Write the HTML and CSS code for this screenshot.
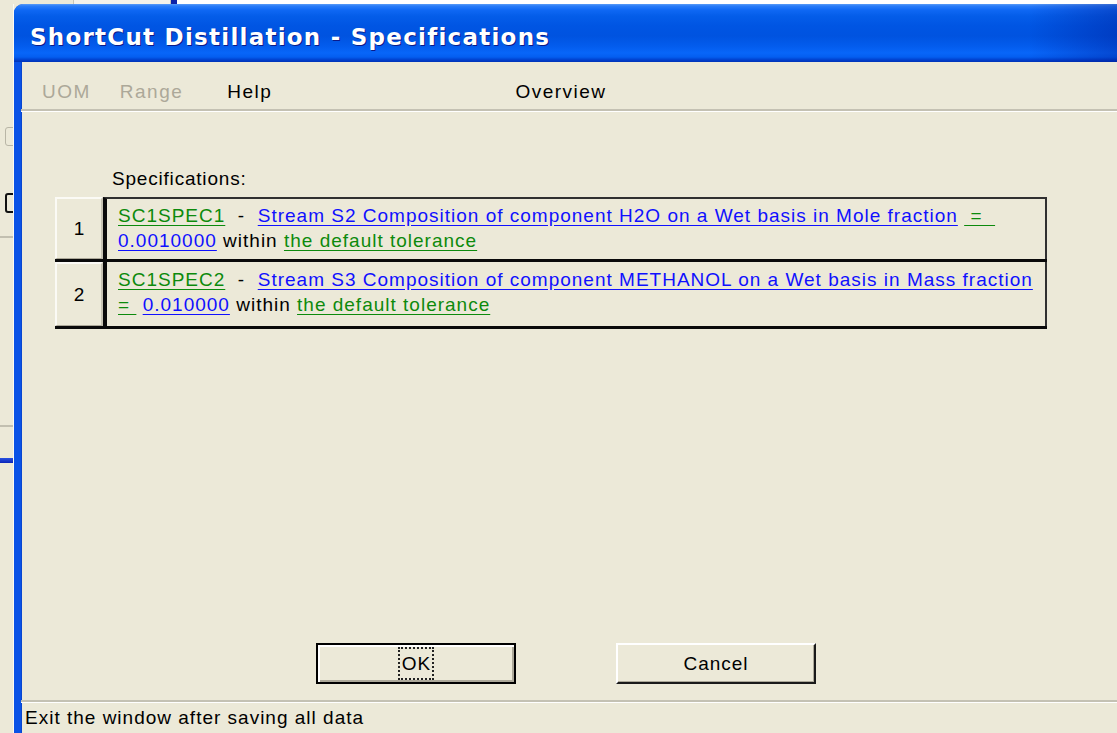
FILE: index.html
```html
<!DOCTYPE html>
<html>
<head>
<meta charset="utf-8">
<title>ShortCut Distillation - Specifications</title>
<link rel="stylesheet" href="styles.css">
</head>
<body>
<div class="screen">
  <div class="desk-top">
    <span class="dt-a"></span><span class="dt-b"></span><span class="dt-blue"></span><span class="dt-rest"></span>
  </div>
  <div class="main">
    <div class="behind">
      <div class="bh-check"></div>
      <div class="bh-char"></div>
      <div class="bh-line bh-line1"></div>
      <div class="bh-line bh-line2"></div>
      <div class="bh-bar"></div>
    </div>
    <div class="dialog">
      <div class="titlebar">
        <span class="title">ShortCut Distillation - Specifications</span>
      </div>
      <div class="menubar">
        <span class="menu disabled m-uom">UOM</span>
        <span class="menu disabled m-range">Range</span>
        <span class="menu m-help">Help</span>
        <span class="menu m-overview">Overview</span>
      </div>
      <div class="body">
        <div class="spec-label">Specifications:</div>
        <div class="spec-table">
          <div class="row">
            <div class="rowhead">1</div>
            <div class="cell cell-first">
              <div class="line"><span class="g">SC1SPEC1</span> &nbsp;- &nbsp;<span class="b">Stream S2 Composition of component H2O on a Wet basis in Mole fraction</span> <span class="g">&nbsp;= &nbsp;</span></div>
              <div class="line"><span class="b">0.0010000</span> within <span class="g">the default tolerance</span></div>
            </div>
          </div>
          <div class="row">
            <div class="rowhead">2</div>
            <div class="cell">
              <div class="line"><span class="g">SC1SPEC2</span> &nbsp;- &nbsp;<span class="b">Stream S3 Composition of component METHANOL on a Wet basis in Mass fraction</span></div>
              <div class="line"><span class="g">=&nbsp;</span> <span class="b">0.010000</span> within <span class="g">the default tolerance</span></div>
            </div>
          </div>
        </div>
      </div>
      <div class="buttons">
        <button class="btn btn-default"><span class="focus">OK</span></button>
        <button class="btn">Cancel</button>
      </div>
      <div class="status">Exit the window after saving all data</div>
    </div>
  </div>
</div>
</body>
</html>
```

FILE: styles.css
```css
html, body {
  margin: 0;
  padding: 0;
}

body {
  width: 1117px;
  height: 733px;
  overflow: hidden;
  background: #ece9d8;
  font-family: "Liberation Sans", Arial, sans-serif;
  font-size: 19px;
  letter-spacing: 0.8px;
  color: #000;
}

.screen {
  width: 1117px;
  height: 733px;
  display: flex;
  flex-direction: column;
  overflow: hidden;
}

/* strip of the desktop showing above the dialog */
.desk-top {
  height: 4px;
  display: flex;
  flex: none;
}
.dt-a { width: 73px; background: #ece9d8; border-right: 1px solid #c9c6b8; }
.dt-b { width: 96px; background: #f4f2ea; border-right: 1px solid #c9c6b8; }
.dt-blue { width: 6px; background: #0c22a8; }
.dt-rest { flex: 1; background: #ffffff; }

.main {
  flex: 1;
  display: flex;
  min-height: 0;
}

/* sliver of the window behind the dialog */
.behind {
  width: 13px;
  flex: none;
  background: #ece9d8;
  border-right: 1px solid #fbfaf5;
  display: flex;
  flex-direction: column;
  overflow: hidden;
}
.bh-check {
  margin-top: 123px;
  margin-left: 5px;
  width: 20px;
  height: 17px;
  border: 1px solid #b9b6a6;
  border-radius: 3px;
  flex: none;
}
.bh-char {
  margin-top: 47px;
  margin-left: 5px;
  width: 14px;
  height: 16px;
  border: 2px solid #111;
  border-radius: 3px 0 0 3px;
  flex: none;
}
.bh-line {
  height: 0;
  border-top: 2px solid #c2bfb0;
  flex: none;
}
.bh-line1 { margin-top: 23px; }
.bh-line2 { margin-top: 187px; }
.bh-bar {
  margin-top: 31px;
  height: 5px;
  background: linear-gradient(#2a52e0, #0a24b8);
  flex: none;
}

.dialog {
  flex: 1;
  display: flex;
  flex-direction: column;
  border-left: 7px solid #0a52e6;
  box-shadow: inset 1px 0 0 #0846d0;
  border-top-left-radius: 9px;
  background: #ece9d8;
  min-width: 0;
}

.titlebar {
  height: 58px;
  flex: none;
  margin-left: -7px;
  border-top-left-radius: 9px;
  background:
    linear-gradient(to right, rgba(0, 0, 0, 0) 92%, rgba(0, 20, 140, 0.35) 100%),
    linear-gradient(to bottom,
      #5a9bf6 0px, #2a7cf8 2px, #0f68f4 6px, #045de9 12px, #0055e3 22px,
      #0053e0 32px, #035ced 42px, #0866f9 49px, #045ef0 53px, #003fcc 56px, #0033b8 58px);
  display: flex;
  align-items: center;
  padding-left: 16px;
}

.title {
  color: #ffffff;
  font-family: "DejaVu Sans", "Liberation Sans", sans-serif;
  font-weight: bold;
  font-size: 23px;
  letter-spacing: 1.25px;
  text-shadow: 1px 1px 0 #0a1a8a;
  margin-top: 8px;
}

.menubar {
  height: 49px;
  flex: none;
  display: flex;
  align-items: center;
  border-bottom: 2px solid #c4c1b3;
  box-shadow: 0 1px 0 #ffffff;
  padding-top: 12px;
  box-sizing: border-box;
}
.menu { letter-spacing: 1.5px; }
.menu.disabled { color: #aca899; }
.m-uom { margin-left: 21px; }
.m-range { margin-left: 29px; }
.m-help { margin-left: 44px; }
.m-overview { margin-left: 243px; }

.body {
  flex: 1;
  padding-left: 34px;
  padding-top: 57px;
}

.spec-label {
  margin-left: 57px;
  height: 26px;
}

.spec-table {
  width: 992px;
  display: flex;
  flex-direction: column;
  margin-top: 3px;
}

.row {
  display: flex;
  height: 64px;
  border-bottom: 3px solid #0a0a0a;
}
.row:first-child { height: 62px; }

.rowhead {
  width: 44px;
  flex: none;
  display: flex;
  align-items: center;
  justify-content: center;
  border-top: 2px solid #fbfaf5;
  border-left: 2px solid #fbfaf5;
  border-right: 2px solid #c7c3b3;
  border-bottom: 1px solid #aca899;
  letter-spacing: 0;
}

.cell {
  flex: 1;
  border-left: 4px solid #0a0a0a;
  border-right: 2px solid #303030;
  padding: 5px 0 0 11px;
  letter-spacing: 1px;
}
.cell-first { border-top: 2px solid #303030; padding-top: 4px; }

.line {
  height: 25px;
  line-height: 25px;
  white-space: nowrap;
}
.g { color: #0c8a0c; text-decoration: underline; text-underline-offset: 3px; }
.b { color: #1010ff; text-decoration: underline; text-underline-offset: 3px; }

.buttons {
  flex: none;
  display: flex;
  padding-left: 295px;
  padding-bottom: 16px;
  gap: 100px;
}

.btn {
  width: 200px;
  height: 41px;
  font-family: "Liberation Sans", Arial, sans-serif;
  font-size: 19px;
  letter-spacing: 1px;
  color: #000;
  background: #ece9d8;
  border-top: 2px solid #ffffff;
  border-left: 2px solid #ffffff;
  border-right: 2px solid #1a1a1a;
  border-bottom: 2px solid #1a1a1a;
  box-shadow: inset -1px -1px 0 #aca899;
  padding: 0;
  display: flex;
  align-items: center;
  justify-content: center;
}
.btn-default {
  border: 2px solid #000;
  box-shadow: inset 2px 2px 0 #ffffff, inset -2px -2px 0 #aca899;
}
.focus {
  border: 2px dotted #222;
  padding: 5px 1px 4px 2px;
  line-height: 20px;
}

.status {
  height: 31px;
  flex: none;
  border-top: 2px solid #c4c1b3;
  box-shadow: inset 0 1px 0 #ffffff;
  padding-left: 4px;
  line-height: 32px;
  letter-spacing: 1px;
}
```
